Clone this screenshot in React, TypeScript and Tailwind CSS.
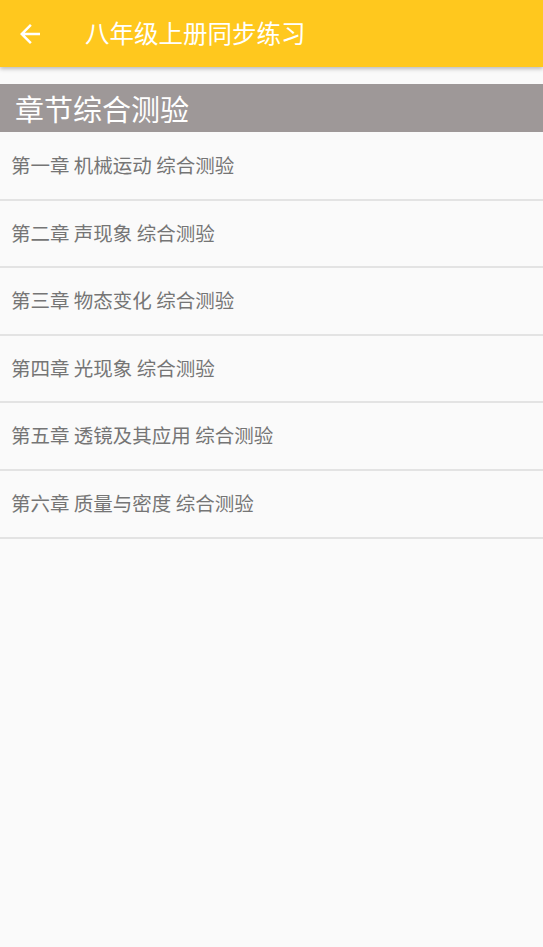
import React from "react";

const items = [
  "第一章 机械运动 综合测验",
  "第二章 声现象 综合测验",
  "第三章 物态变化 综合测验",
  "第四章 光现象 综合测验",
  "第五章 透镜及其应用 综合测验",
  "第六章 质量与密度 综合测验",
];

export default function App() {
  return (
    <div
      className="w-[543px] h-[947px] bg-[#fafafa] flex flex-col overflow-hidden"
      style={{ fontFamily: '"Noto Sans CJK SC", "Noto Sans", sans-serif' }}
    >
      <div className="h-[67px] bg-[#ffc81e] flex items-center shadow-[0_2px_4px_rgba(0,0,0,0.25)] relative z-10 shrink-0">
        <div className="w-[60px] flex items-center justify-center">
          <svg width="30" height="30" viewBox="0 0 24 24">
            <path d="M20 11H7.83l5.59-5.59L12 4l-8 8 8 8 1.41-1.41L7.83 13H20v-2z" fill="#ffffff" />
          </svg>
        </div>
        <div className="ml-[25px] text-white text-[24.5px] leading-none">八年级上册同步练习</div>
      </div>
      <div className="h-[17px] shrink-0" />
      <div className="h-[48px] bg-[#9e9898] flex items-center pl-[15px] shrink-0">
        <span className="text-white text-[29px] leading-none">章节综合测验</span>
      </div>
      <div className="flex flex-col pt-[1px]">
        {items.map((t) => (
          <div
            key={t}
            className="h-[67.6px] border-b-2 border-[#e3e3e3] flex items-center pl-[11px] pb-[2px]"
          >
            <span className="text-[19.5px] text-[#757575] leading-none">{t}</span>
          </div>
        ))}
      </div>
    </div>
  );
}
